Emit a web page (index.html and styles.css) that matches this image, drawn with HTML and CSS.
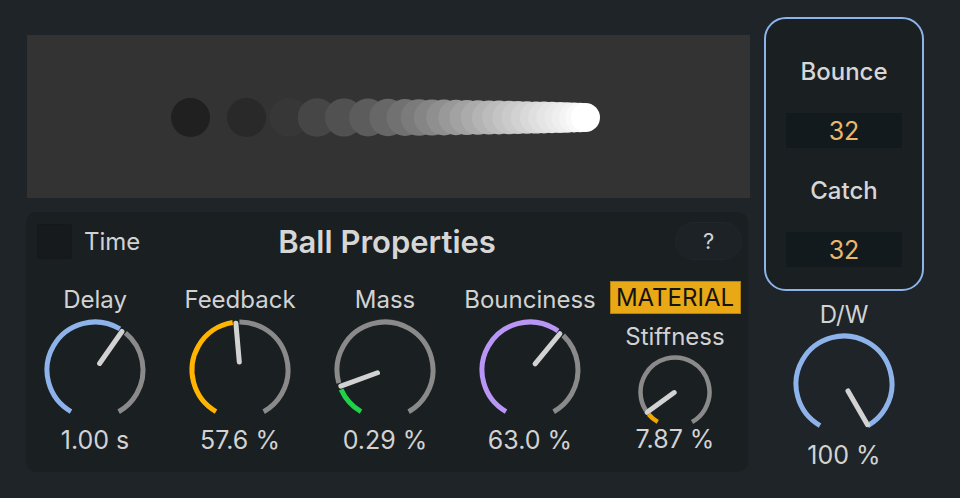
FILE: index.html
```html
<!DOCTYPE html>
<html lang="en">

<head>
  <meta charset="UTF-8">
  <meta name="viewport" content="width=device-width, initial-scale=1.0">
  <title>Ball Bounce</title>
  <link rel="stylesheet" href="styles.css">
</head>

<body>
  <div class="device">
    <div class="main">
      <div class="display">
        <svg class="trail" viewBox="0 0 723 163" width="723" height="163">
          <circle cx="163.5" cy="82.5" r="19.5" fill="#202020" />
          <circle cx="219.5" cy="82.5" r="19.5" fill="#292929" />
          <circle cx="262" cy="82.5" r="19.5" fill="#373737" />
          <circle cx="290" cy="82.5" r="19.3" fill="#464646" />
          <circle cx="317" cy="82.5" r="19.1" fill="#515151" />
          <circle cx="341" cy="82.5" r="18.9" fill="#5c5c5c" />
          <circle cx="361" cy="82.5" r="18.7" fill="#676767" />
          <circle cx="378" cy="82.5" r="18.5" fill="#717171" />
          <circle cx="392" cy="82.5" r="18.3" fill="#7b7b7b" />
          <circle cx="405" cy="82.5" r="18.1" fill="#858585" />
          <circle cx="417" cy="82.5" r="17.9" fill="#8f8f8f" />
          <circle cx="429" cy="82.5" r="17.7" fill="#999999" />
          <circle cx="440" cy="82.5" r="17.5" fill="#a2a2a2" />
          <circle cx="451" cy="82.5" r="17.3" fill="#ababab" />
          <circle cx="462" cy="82.5" r="17.1" fill="#b4b4b4" />
          <circle cx="472" cy="82.5" r="16.9" fill="#bcbcbc" />
          <circle cx="482" cy="82.5" r="16.7" fill="#c4c4c4" />
          <circle cx="491" cy="82.5" r="16.5" fill="#cbcbcb" />
          <circle cx="500" cy="82.5" r="16.3" fill="#d2d2d2" />
          <circle cx="509" cy="82.5" r="16.1" fill="#d9d9d9" />
          <circle cx="517" cy="82.5" r="15.9" fill="#dfdfdf" />
          <circle cx="525" cy="82.5" r="15.7" fill="#e5e5e5" />
          <circle cx="533" cy="82.5" r="15.5" fill="#eaeaea" />
          <circle cx="540" cy="82.5" r="15.3" fill="#efefef" />
          <circle cx="547" cy="82.5" r="15" fill="#f4f4f4" />
          <circle cx="553" cy="82.5" r="14.8" fill="#f9f9f9" />
          <circle cx="558.5" cy="82.5" r="14.5" fill="#ffffff" />
        </svg>
      </div>

      <div class="panel">
        <div class="panel-head">
          <div class="toggle">
            <span class="checkbox"></span>
            <span class="toggle-label">Time</span>
          </div>
          <div class="panel-title">Ball Properties</div>
          <div class="help">?</div>
        </div>

        <div class="knobs">
          <div class="knob">
            <div class="knob-label">Delay</div>
            <svg class="dial" viewBox="0 0 110 100" width="110" height="100">
              <circle class="track" cx="55" cy="52" r="48" stroke-dasharray="0 158.34 92.99 400" transform="rotate(120 55 52)" />
              <circle class="val blue" cx="55" cy="52" r="48" stroke-dasharray="151.63 400" transform="rotate(120 55 52)" />
              <line class="needle" x1="55" y1="44" x2="55" y2="5" transform="rotate(35 55 52)" />
            </svg>
            <div class="knob-value">1.00 s</div>
          </div>

          <div class="knob">
            <div class="knob-label">Feedback</div>
            <svg class="dial" viewBox="0 0 110 100" width="110" height="100">
              <circle class="track" cx="55" cy="52" r="48" stroke-dasharray="0 124.83 126.5 400" transform="rotate(120 55 52)" />
              <circle class="val amber" cx="55" cy="52" r="48" stroke-dasharray="118.12 400" transform="rotate(120 55 52)" />
              <line class="needle" x1="55" y1="44" x2="55" y2="5" transform="rotate(-5 55 52)" />
            </svg>
            <div class="knob-value">57.6 %</div>
          </div>

          <div class="knob">
            <div class="knob-label">Mass</div>
            <svg class="dial" viewBox="0 0 110 100" width="110" height="100">
              <circle class="track" cx="55" cy="52" r="48" stroke-dasharray="0 36.86 214.47 400" transform="rotate(120 55 52)" />
              <circle class="val green" cx="55" cy="52" r="48" stroke-dasharray="30.16 400" transform="rotate(120 55 52)" />
              <line class="needle" x1="55" y1="44" x2="55" y2="5" transform="rotate(-110 55 52)" />
            </svg>
            <div class="knob-value">0.29 %</div>
          </div>

          <div class="knob">
            <div class="knob-label">Bounciness</div>
            <svg class="dial" viewBox="0 0 110 100" width="110" height="100">
              <circle class="track" cx="55" cy="52" r="48" stroke-dasharray="0 162.1 89.22 400" transform="rotate(120 55 52)" />
              <circle class="val purple" cx="55" cy="52" r="48" stroke-dasharray="155.4 400" transform="rotate(120 55 52)" />
              <line class="needle" x1="55" y1="44" x2="55" y2="5" transform="rotate(39.5 55 52)" />
            </svg>
            <div class="knob-value">63.0 %</div>
          </div>

          <div class="knob knob-small">
            <div class="badge">MATERIAL</div>
            <div class="knob-label">Stiffness</div>
            <svg class="dial" viewBox="0 0 80 72" width="80" height="72">
              <circle class="track thin" cx="40" cy="38" r="34.5" stroke-dasharray="0 16.86 163.78 400" transform="rotate(120 40 38)" />
              <circle class="val orange thin" cx="40" cy="38" r="34.5" stroke-dasharray="12.04 400" transform="rotate(120 40 38)" />
              <line class="needle" x1="40" y1="37" x2="40" y2="3.5" transform="rotate(-126 40 38)" />
            </svg>
            <div class="knob-value">7.87 %</div>
          </div>
        </div>
      </div>
    </div>

    <div class="side">
      <div class="macros">
        <div class="macro-label">Bounce</div>
        <div class="numbox">32</div>
        <div class="macro-label">Catch</div>
        <div class="numbox">32</div>
      </div>

      <div class="knob knob-dw">
        <div class="knob-label">D/W</div>
        <svg class="dial" viewBox="0 0 110 100" width="110" height="100">
          <circle class="val blue" cx="55" cy="52" r="48" stroke-dasharray="251.33 400" transform="rotate(120 55 52)" />
          <line class="needle" x1="55" y1="44" x2="55" y2="5" transform="rotate(150 55 52)" />
        </svg>
        <div class="knob-value">100 %</div>
      </div>
    </div>
  </div>
</body>

</html>
```

FILE: styles.css
```css
body {
  margin: 0;
  background-color: #1e2428;
  font-family: Inter, Roboto, "Liberation Sans", sans-serif;
  color: #d2d2d2;
}

.device {
  display: flex;
  width: 960px;
  height: 498px;
  padding: 17px 0 0 26px;
  box-sizing: border-box;
}

.main {
  display: flex;
  flex-direction: column;
  gap: 14px;
  width: 724px;
  padding-top: 18px;
}

.display {
  width: 723px;
  height: 163px;
  margin-left: 1px;
  background-color: #333333;
}

.trail {
  display: block;
}

.panel {
  width: 722px;
  height: 260px;
  padding-top: 10px;
  box-sizing: border-box;
  background-color: #1a1f22;
  border-radius: 10px;
}

.panel-head {
  display: grid;
  grid-template-columns: 1fr auto 1fr;
  align-items: center;
  height: 38px;
}

.toggle {
  display: flex;
  align-items: center;
  padding-left: 11px;
}

.checkbox {
  width: 33px;
  height: 33px;
  background-color: #161a1d;
  border: 1px solid #14181a;
  border-radius: 2px;
}

.toggle-label {
  margin-left: 12px;
  font-size: 24px;
}

.panel-title {
  font-size: 31px;
  font-weight: 600;
  color: #d6d6d6;
}

.help {
  justify-self: end;
  width: 65px;
  height: 36px;
  margin-right: 6px;
  border: 1px solid #202629;
  border-radius: 19px;
  background-color: #1c2225;
  font-size: 22px;
  line-height: 36px;
  text-align: center;
}

.knobs {
  display: grid;
  grid-template-columns: repeat(5, 138px);
  column-gap: 7px;
  align-items: start;
  margin-top: 27px;
}

.knob {
  display: flex;
  flex-direction: column;
  align-items: center;
}

.knob-label,
.knob-value {
  font-size: 24px;
  line-height: 26px;
  white-space: nowrap;
}

.knob-value {
  margin-top: 9px;
  font-size: 25px;
}

.knob .dial {
  display: block;
  margin-top: 5px;
}

.knob-small {
  margin-top: -6px;
}

.badge {
  width: 129px;
  height: 31px;
  border: 1px solid #b5820c;
  background-color: #e9a815;
  color: #141414;
  font-size: 24px;
  line-height: 32px;
  text-align: center;
}

.knob-small .knob-label {
  margin-top: 10px;
}

.knob-small .dial {
  margin-top: 4px;
}

.knob-small .knob-value {
  margin-top: 0;
}

.track,
.val {
  fill: none;
  stroke-width: 5;
}

.thin {
  stroke-width: 4.5;
}

.track {
  stroke: #8a8a8a;
}

.blue {
  stroke: #8eb3ea;
}

.amber {
  stroke: #ffb400;
}

.green {
  stroke: #20d24a;
}

.purple {
  stroke: #b996f6;
}

.orange {
  stroke: #f0a500;
}

.needle {
  stroke: #d2d2d2;
  stroke-width: 5;
  stroke-linecap: round;
}

.side {
  display: flex;
  flex-direction: column;
  align-items: center;
  width: 160px;
  margin-left: 14px;
}

.macros {
  display: flex;
  flex-direction: column;
  align-items: center;
  width: 160px;
  height: 274px;
  padding-top: 38px;
  box-sizing: border-box;
  border: 2px solid #8eb3ea;
  border-radius: 22px;
  background-color: #1a1f22;
}

.macro-label {
  font-size: 24px;
  font-weight: 500;
  line-height: 30px;
  color: #d6d6d6;
}

.numbox {
  width: 116px;
  height: 35px;
  margin: 26px 0 28px;
  background-color: #131a1e;
  color: #ebb86b;
  font-size: 25px;
  line-height: 36px;
  text-align: center;
}

.numbox:last-child {
  margin-bottom: 0;
}

.knob-dw {
  margin-top: 11px;
}

.knob-dw .dial {
  margin-top: 4px;
}

.knob-dw .knob-value {
  margin-top: 10px;
}
```
